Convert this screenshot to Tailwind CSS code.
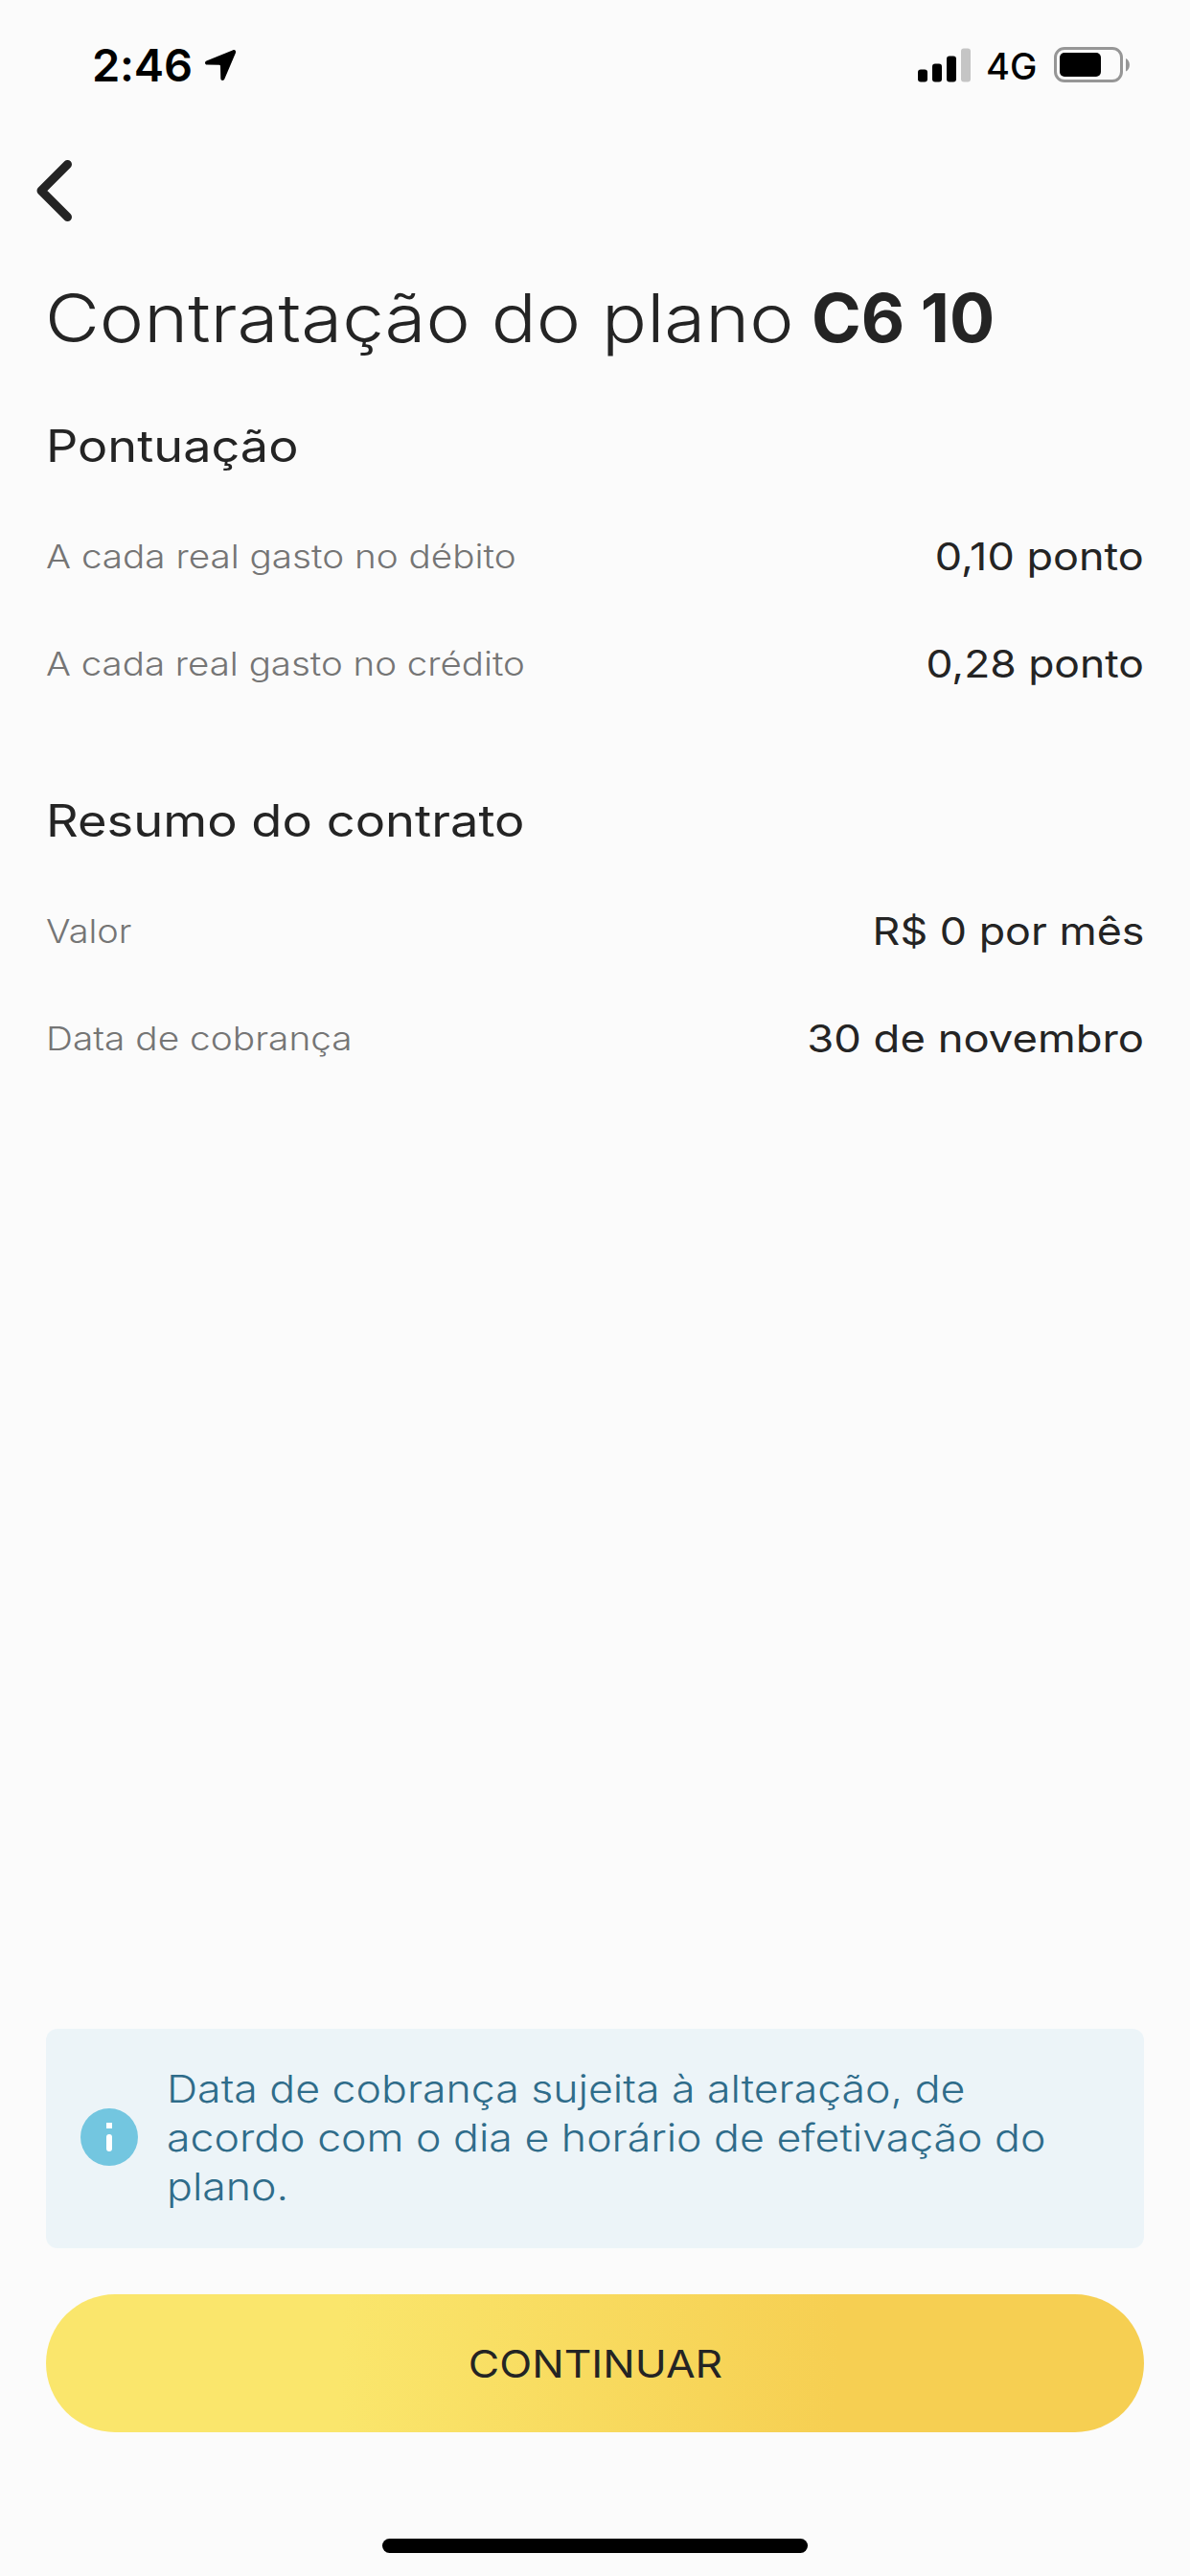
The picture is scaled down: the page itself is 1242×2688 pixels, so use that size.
<!DOCTYPE html>
<html lang="pt-BR">
<head>
    <meta charset="UTF-8">
    <meta name="viewport" content="width=device-width, initial-scale=1.0">
    <title>Contratação do plano</title>
    <script src="https://cdn.jsdelivr.net/npm/@tailwindcss/browser@4"></script>
</head>
<body class="bg-[#fbfbfb] font-['Inter',sans-serif] text-[#242424]">
    <div class="w-[1242px] h-[2688px] flex flex-col overflow-hidden">

        <!-- Status bar -->
        <div class="h-[136px] shrink-0 flex items-center justify-between pl-24 pr-[62px] text-black">
            <div class="flex items-center gap-3">
                <span class="text-[47px] leading-[60px] font-semibold tracking-[-0.2px]">2:46</span>
                <svg class="w-[34px] h-[34px]" viewBox="0 0 34 34" fill="currentColor">
                    <path d="M30.3 1.2 2.5 12.4C.2 13.4.8 16.4 3 16.5L15.8 16.7Q17 16.7 17 18L17.3 30.8C17.4 33.4 20.3 33.8 21.3 31.6L32.9 4.2C33.7 2.2 32.2.5 30.3 1.2Z" />
                </svg>
            </div>
            <div class="flex items-center">
                <svg class="w-[55px] h-9" viewBox="0 0 55 36">
                    <rect x="0" y="22.5" width="10" height="13" rx="3" />
                    <rect x="15" y="16.5" width="10" height="19" rx="3" />
                    <rect x="30" y="8.5" width="10" height="27" rx="3" />
                    <rect x="45" y="0.5" width="10" height="35" rx="3" fill="#c5c5c5" />
                </svg>
                <span class="ml-4 mt-0.5 w-[71px] text-[38px] leading-[48px] font-medium">4G</span>
                <svg class="w-[80px] h-[38px]" viewBox="0 0 80 38">
                    <rect x="1.5" y="1.5" width="69" height="34" rx="9.5" fill="none" stroke="#969696" stroke-width="3" />
                    <rect x="6" y="6" width="43" height="25" rx="5" />
                    <path d="M75 12C80.200 14 80.200 23.500 75 25.500Z" fill="#969696" />
                </svg>
            </div>
        </div>

        <!-- Back -->
        <button class="h-[125px] shrink-0 pl-9 flex items-center">
            <svg class="w-[42px] h-[66px]" viewBox="0 0 42 66" fill="none" stroke="currentColor" stroke-width="9" stroke-linecap="round" stroke-linejoin="round">
                <path d="M34.500 5.500 7 33 34.500 60.500" />
            </svg>
        </button>

        <main class="flex-1 flex flex-col px-12">
            <h1 class="mt-[27px] flex text-[70px] leading-[88px] whitespace-nowrap">
                <span class="-ml-px w-[700px] origin-left scale-x-[1.116] font-light">Contratação do plano</span>
                <span class="ml-[100px] font-bold">C6 10</span>
            </h1>

            <section class="mt-[59px]">
                <h2 class="w-fit origin-left scale-x-[1.135] text-[46px] leading-[60px]">Pontuação</h2>
                <dl class="mt-[30px]">
                    <div class="h-28 flex items-center justify-between">
                        <dt class="origin-left scale-x-[1.12] text-[34.5px] font-light text-[#757575]">A cada real gasto no débito</dt>
                        <dd class="origin-right scale-x-[1.125] text-[40px]">0,10 ponto</dd>
                    </div>
                    <div class="h-28 flex items-center justify-between">
                        <dt class="origin-left scale-x-[1.115] text-[34.5px] font-light text-[#757575]">A cada real gasto no crédito</dt>
                        <dd class="origin-right scale-x-[1.11] text-[40px]">0,28 ponto</dd>
                    </div>
                </dl>
            </section>

            <section class="mt-[77px]">
                <h2 class="w-fit origin-left scale-x-[1.14] text-[46px] leading-[60px]">Resumo do contrato</h2>
                <dl class="mt-[30px]">
                    <div class="h-28 flex items-center justify-between">
                        <dt class="origin-left scale-x-[1.1] text-[34.5px] font-light text-[#757575]">Valor</dt>
                        <dd class="origin-right scale-x-[1.12] text-[40px]">R$ 0 por mês</dd>
                    </div>
                    <div class="h-28 flex items-center justify-between">
                        <dt class="origin-left scale-x-[1.125] text-[34.5px] font-light text-[#757575]">Data de cobrança</dt>
                        <dd class="origin-right scale-x-[1.135] text-[40px]">30 de novembro</dd>
                    </div>
                </dl>
            </section>

            <!-- Notice -->
            <div class="mt-auto h-[229px] rounded-xl bg-[#ecf4f8] pl-9 flex items-center">
                <svg class="w-[60px] h-[60px] shrink-0 mt-[-3px]" viewBox="0 0 60 60">
                    <circle cx="30" cy="30" r="30" fill="#73c6e0" />
                    <rect x="27" y="15" width="6" height="6" fill="#fff" />
                    <rect x="27" y="27" width="6" height="18" rx="3" fill="#fff" />
                </svg>
                <p class="ml-[30px] pb-0.5 origin-left scale-x-[1.116] text-[40px] leading-[51px] font-light text-[#2f6c8a] whitespace-nowrap">
                    Data de cobrança sujeita à alteração, de<br>
                    acordo com o dia e horário de efetivação do<br>
                    plano.
                </p>
            </div>

            <button class="mt-12 mb-[111px] h-36 shrink-0 rounded-full bg-[linear-gradient(92deg,#fae66c_27%,#f6cf52_72%)] pt-0.5 flex items-center justify-center">
                <span class="scale-x-[1.11] text-[40px]">CONTINUAR</span>
            </button>
        </main>

        <!-- Home indicator -->
        <div class="mx-auto mb-6 w-[444px] h-[15px] shrink-0 rounded-full bg-black"></div>
    </div>
</body>
</html>
